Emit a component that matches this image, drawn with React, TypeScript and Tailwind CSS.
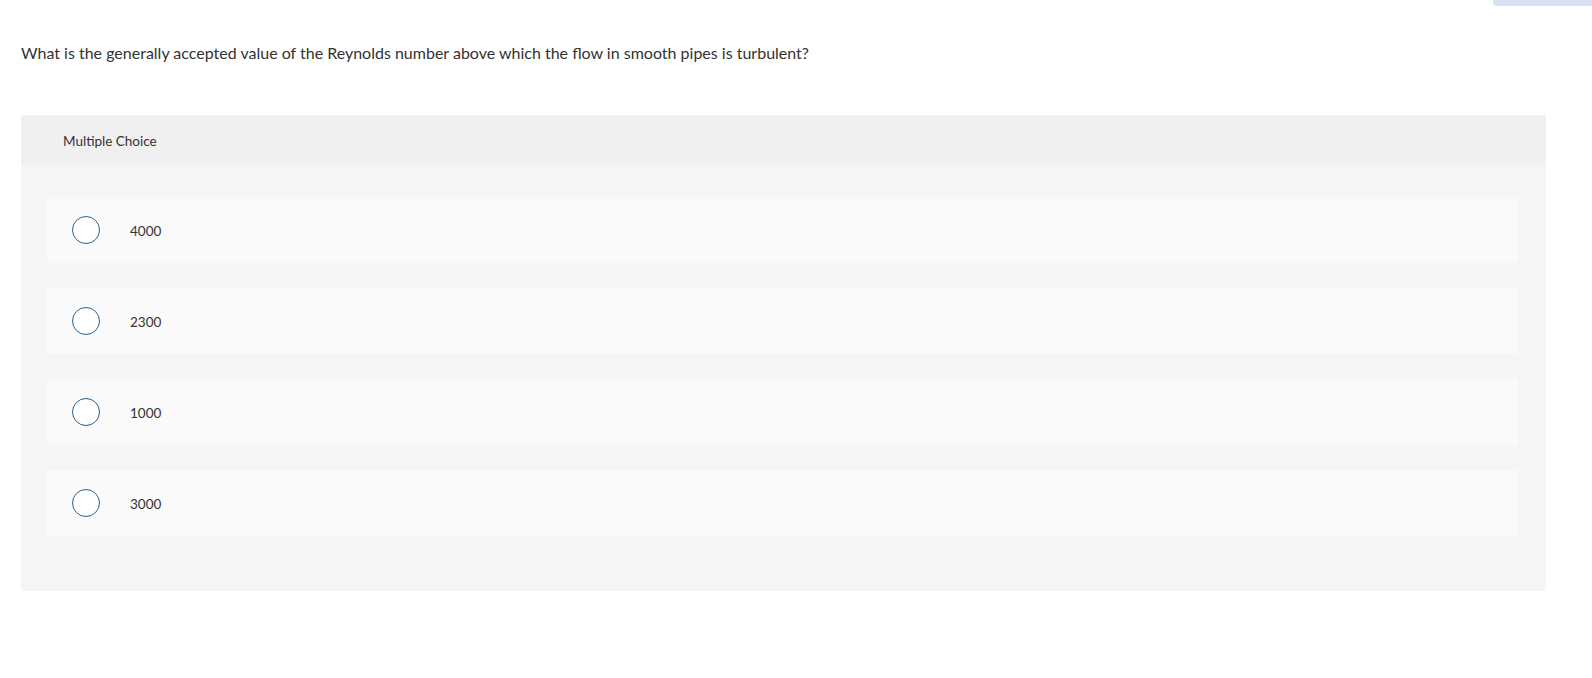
import React from "react";

const options = ["4000", "2300", "1000", "3000"];

export default function App() {
  return (
    <div
      className="relative min-h-screen bg-white text-[#333333]"
      style={{ fontFamily: "Lato, 'Open Sans', 'Liberation Sans', sans-serif" }}
    >
      <div className="absolute right-0 top-0 h-[6px] w-[99px] rounded-bl-[4px] bg-[#d6e2f0]" />
      <div className="pl-[21px] pr-[46px] pt-[41px]">
        <p className="text-[16px] leading-[24px]">
          What is the generally accepted value of the Reynolds number above which the flow in smooth pipes is turbulent?
        </p>
        <div className="mt-[50px] overflow-hidden rounded-[3px] bg-[#f5f5f5]">
          <div className="flex h-[50px] items-center bg-[#f0f0f0] pl-[42px] pt-[2px] text-[13.5px]">
            Multiple Choice
          </div>
          <div className="flex flex-col gap-[25px] pb-[55px] pl-[26px] pr-[28px] pt-[32px]">
            {options.map((o) => (
              <div
                key={o}
                className="flex h-[66px] items-center rounded-[3px] bg-[#fafafa] pl-[25px]"
              >
                <span className="h-[28px] w-[28px] shrink-0 rounded-full border-[1.5px] border-[#2b5f91] bg-white" />
                <span className="ml-[30px] pt-[2px] text-[13.5px]">{o}</span>
              </div>
            ))}
          </div>
        </div>
      </div>
    </div>
  );
}
